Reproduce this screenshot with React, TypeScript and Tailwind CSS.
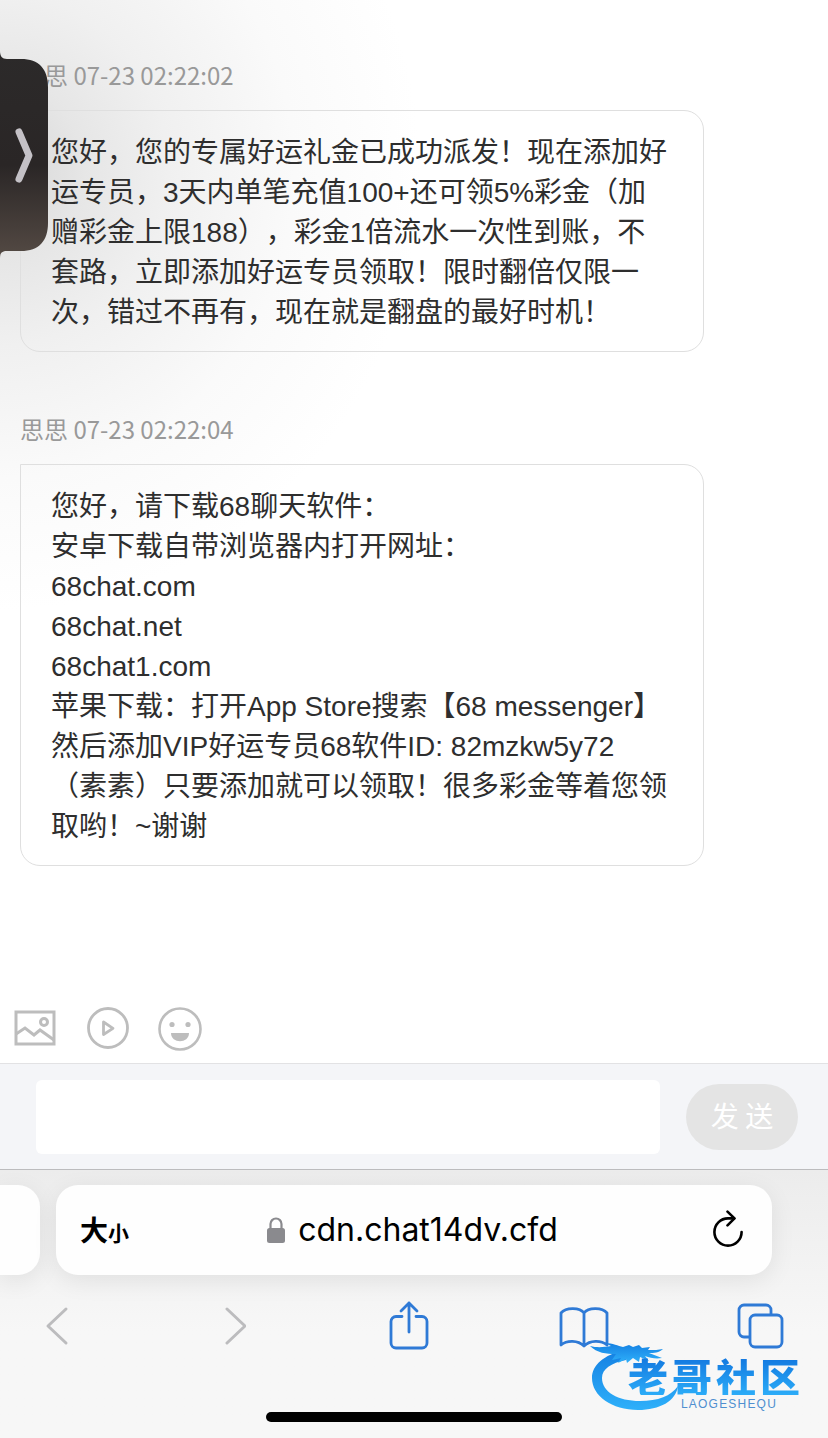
import { useState } from "react";

type Message = {
  name: string;
  time: string;
  lines: string[];
};

const messages: Message[] = [
  {
    name: "思思",
    time: "07-23 02:22:02",
    lines: [
      "您好，您的专属好运礼金已成功派发！现在添加好",
      "运专员，3天内单笔充值100+还可领5%彩金（加",
      "赠彩金上限188），彩金1倍流水一次性到账，不",
      "套路，立即添加好运专员领取！限时翻倍仅限一",
      "次，错过不再有，现在就是翻盘的最好时机！",
    ],
  },
  {
    name: "思思",
    time: "07-23 02:22:04",
    lines: [
      "您好，请下载68聊天软件：",
      "安卓下载自带浏览器内打开网址：",
      "68chat.com",
      "68chat.net",
      "68chat1.com",
      "苹果下载：打开App Store搜索【68 messenger】",
      "然后添加VIP好运专员68软件ID: 82mzkw5y72",
      "（素素）只要添加就可以领取！很多彩金等着您领",
      "取哟！~谢谢",
    ],
  },
];

export default function ChatPage() {
  const [text, setText] = useState("");

  return (
    <div
      lang="zh-CN"
      className="relative flex min-h-screen flex-col overflow-hidden bg-white font-['Liberation_Sans','Noto_Sans_CJK_SC',sans-serif] [text-spacing-trim:space-all]"
    >
      <main className="flex-1 bg-[radial-gradient(ellipse_420px_440px_at_0px_170px,#d6d6d6_0%,#e6e6e6_20%,#f0f0f0_40%,#fafafa_70%,#ffffff_100%)] px-5 pt-[59px]">
        <div className="flex flex-col gap-[61px]">
          {messages.map((m) => (
            <MessageItem key={m.time} message={m} />
          ))}
        </div>
      </main>

      <Toolbar />

      {/* ===== INPUT BAR ===== */}
      <form
        onSubmit={(e) => e.preventDefault()}
        className="flex items-center gap-[26px] border-t border-[#e2e2e4] bg-[#f4f5f8] pt-4 pr-[30px] pb-[15px] pl-9"
      >
        <input
          type="text"
          aria-label="消息"
          value={text}
          onChange={(e) => setText(e.target.value)}
          className="h-[74px] min-w-0 flex-1 rounded-md bg-white px-4 text-[28px] outline-none"
        />
        <button
          type="submit"
          className="h-[66px] w-28 rounded-full bg-[#e4e4e4] pb-1 font-['Noto_Sans_CJK_SC',sans-serif] text-[28px] text-white"
        >
          发 送
        </button>
      </form>

      <BrowserBar />
      <DrawerHandle />
    </div>
  );
}

/* COMPONENTS */

function MessageItem({ message }: { message: Message }) {
  return (
    <article>
      <p className="mb-[19px] font-['Noto_Sans_CJK_SC',sans-serif] text-[24px] leading-8 text-[#999999]">
        {message.name} {message.time}
      </p>
      <div className="w-[684px] max-w-full rounded-[20px] rounded-tl-none border border-[#dfdfdf] px-[30px] pt-[22px] pb-[18px] text-[28px] leading-10 whitespace-nowrap text-[#2e2e2e]">
        {message.lines.map((line) => (
          <p key={line}>{line}</p>
        ))}
      </div>
    </article>
  );
}

function Toolbar() {
  return (
    <div className="flex items-center gap-7 px-3 pb-3 text-[#bdbdbd]">
      <button type="button" aria-label="图片">
        <svg width="46" height="44" viewBox="0 0 46 44" fill="none" stroke="currentColor" strokeWidth="3">
          <rect x="4" y="5" width="38" height="32" />
          <circle cx="32" cy="15" r="3.5" />
          <path d="M4 27l9-6 9 7 6-5 14 10" />
        </svg>
      </button>
      <button type="button" aria-label="视频">
        <svg width="44" height="44" viewBox="0 0 44 44" fill="none" stroke="currentColor" strokeWidth="2.8">
          <circle cx="22" cy="21" r="19.5" />
          <path d="M17.500 15v12.500l9.500-6.200z" strokeLinejoin="round" />
        </svg>
      </button>
      <button type="button" aria-label="表情">
        <svg width="44" height="44" viewBox="0 0 44 44" fill="none" stroke="currentColor" strokeWidth="2.6">
          <circle cx="22" cy="22" r="20.5" />
          <circle cx="14" cy="17.5" r="2.6" fill="currentColor" stroke="none" />
          <circle cx="30" cy="17.5" r="2.6" fill="currentColor" stroke="none" />
          <path d="M13 26h18c0 11-18 11-18 0z" fill="currentColor" stroke="none" />
        </svg>
      </button>
    </div>
  );
}

function BrowserBar() {
  return (
    <footer className="relative border-t border-[#bcbcbe] bg-linear-to-b from-[#ececec] to-[#f7f7f7] to-60%">
      <div className="flex gap-4 pt-[15px] pr-14">
        <div className="h-[90px] w-10 rounded-r-[22px] bg-[#fefefe] shadow-[0_6px_24px_rgba(0,0,0,0.08)]" />
        <div className="grid h-[90px] flex-1 grid-cols-[1fr_auto_1fr] items-center rounded-[22px] bg-[#fefefe] pr-7 pl-6 text-black shadow-[0_6px_24px_rgba(0,0,0,0.08)]">
          <button type="button" className="flex items-baseline justify-self-start pt-1 font-bold" aria-label="大小">
            <span className="text-[28px]">大</span>
            <span className="text-[21px]">小</span>
          </button>
          <div className="flex items-center gap-3 font-['Inter',sans-serif] text-[32px]">
            <svg width="20" height="28" viewBox="0 0 20 28" fill="#8a8a8e">
              <rect x="1" y="12" width="18" height="15" rx="2.5" />
              <path d="M4.500 13V8a5.500 5.500 0 0 1 11 0v5" fill="none" stroke="#8a8a8e" strokeWidth="2.2" />
            </svg>
            <span>cdn.chat14dv.cfd</span>
          </div>
          <button type="button" aria-label="刷新" className="justify-self-end">
            <svg width="34" height="40" viewBox="0 0 34 40" fill="none" stroke="currentColor" strokeWidth="2.6" strokeLinecap="round" strokeLinejoin="round">
              <path d="M31.600 22a13.600 13.600 0 1 1-13.600-13.600h6" />
              <path d="M17.500 1.600l7 6.800-7 7" />
            </svg>
          </button>
        </div>
      </div>

      <nav className="flex items-center justify-between pt-[26px] pr-[43px] pl-8 text-[#2f7ad6]">
        <button type="button" aria-label="后退" className="flex w-[50px] justify-center text-[#bcbcbe]">
          <svg width="26" height="50" viewBox="0 0 26 50" fill="none" stroke="currentColor" strokeWidth="3" strokeLinecap="round" strokeLinejoin="round">
            <path d="M22 8L4 25l18 17" />
          </svg>
        </button>
        <button type="button" aria-label="前进" className="flex w-[50px] justify-center text-[#bcbcbe]">
          <svg width="26" height="50" viewBox="0 0 26 50" fill="none" stroke="currentColor" strokeWidth="3" strokeLinecap="round" strokeLinejoin="round">
            <path d="M7 8l18 17L7 42" />
          </svg>
        </button>
        <button type="button" aria-label="分享" className="flex w-[50px] justify-center">
          <svg width="40" height="50" viewBox="0 0 40 50" fill="none" stroke="currentColor" strokeWidth="2.8" strokeLinecap="round" strokeLinejoin="round">
            <path d="M13 15.500H7a5 5 0 0 0-5 5V42a5 5 0 0 0 5 5h26a5 5 0 0 0 5-5V20.500a5 5 0 0 0-5-5h-6" />
            <path d="M20 31V2M12 10l8-8 8 8" />
          </svg>
        </button>
        <button type="button" aria-label="书签" className="flex w-[50px] justify-center">
          <svg width="50" height="50" viewBox="0 0 50 50" fill="none" stroke="currentColor" strokeWidth="2.8" strokeLinecap="round" strokeLinejoin="round">
            <path d="M25 12v33M25 12c-4-5.500-18-6-23 0v32c6-5 17-5 23 1 6-6 17-6 23-1V12c-5-6-19-5.500-23 0z" />
          </svg>
        </button>
        <button type="button" aria-label="标签页" className="flex w-[50px] justify-center">
          <svg width="48" height="50" viewBox="0 0 48 50" fill="none" stroke="currentColor" strokeWidth="2.8" strokeLinejoin="round">
            <rect x="14" y="14" width="32" height="32" rx="5" />
            <path d="M14 36H8a5 5 0 0 1-5-5V9a5 5 0 0 1 5-5h22a5 5 0 0 1 5 5v5" />
          </svg>
        </button>
      </nav>

      <div className="flex justify-center pt-[61px] pb-4">
        <div className="h-[10px] w-[296px] rounded-full bg-black" />
      </div>

      <Watermark />
    </footer>
  );
}

function Watermark() {
  return (
    <div className="pointer-events-none absolute right-3 bottom-6 h-[74px] w-[226px]">
      <svg width="226" height="74" viewBox="0 0 226 74" className="absolute inset-0">
        <defs>
          <linearGradient id="dragon" x1="0" y1="0" x2="0" y2="1">
            <stop offset="0" stopColor="#1580e2" />
            <stop offset="1" stopColor="#2eb0fa" />
          </linearGradient>
        </defs>
        <path
          d="M34 10C14 15 2 25 2 38c0 18 20 32 46 32 22 0 38-9 40-24-7 10-20 15-38 15-22 0-38-9-38-23 0-9 9-15 24-18z"
          fill="url(#dragon)"
        />
        <path
          d="M0 6c8 2 14 1 21 0l-6-3c8 0 13 3 18 4l6-2 4 2 6-2 3 3 8-1-2 3c7 0 10 0 15-1-4 4-9 4-14 4l13 5c-6 1-12 0-17-2l4 5-9-4-1 5-6-4-6 5-1-4-8 4 3-5-9 2 4-6c-10 0-19-1-26-8z"
          fill="url(#dragon)"
        />
      </svg>
      <div className="absolute top-[17px] left-[38px]">
        <p className="bg-linear-to-b from-[#1477df] to-[#2cacf8] bg-clip-text font-['Noto_Sans_CJK_SC',sans-serif] text-[40px] leading-[38px] font-black tracking-widest whitespace-nowrap text-transparent">
          老哥社区
        </p>
        <p className="pt-1 pl-[53px] text-[12px] leading-[10px] tracking-widest text-[#4f8fd0]">LAOGESHEQU</p>
      </div>
    </div>
  );
}

function DrawerHandle() {
  return (
    <button type="button" aria-label="展开" className="absolute top-[51px] left-0">
      <svg width="48" height="207" viewBox="0 0 48 207">
        <defs>
          <linearGradient id="handle" x1="0" y1="0" x2="0" y2="1">
            <stop offset="0" stopColor="#2c2a2a" />
            <stop offset="0.55" stopColor="#2a2626" />
            <stop offset="1" stopColor="#544a44" />
          </linearGradient>
        </defs>
        <path
          d="M0 0c0 5 2 8 7 8h14c18 0 27 10 27 28v136c0 18-9 28-27 28H7c-5 0-7 2-7 7z"
          fill="url(#handle)"
        />
        <path d="M19 81l10 23.500-10 23.500" fill="none" stroke="#c4c1c6" strokeWidth="7" strokeLinecap="round" strokeLinejoin="round" />
      </svg>
    </button>
  );
}
